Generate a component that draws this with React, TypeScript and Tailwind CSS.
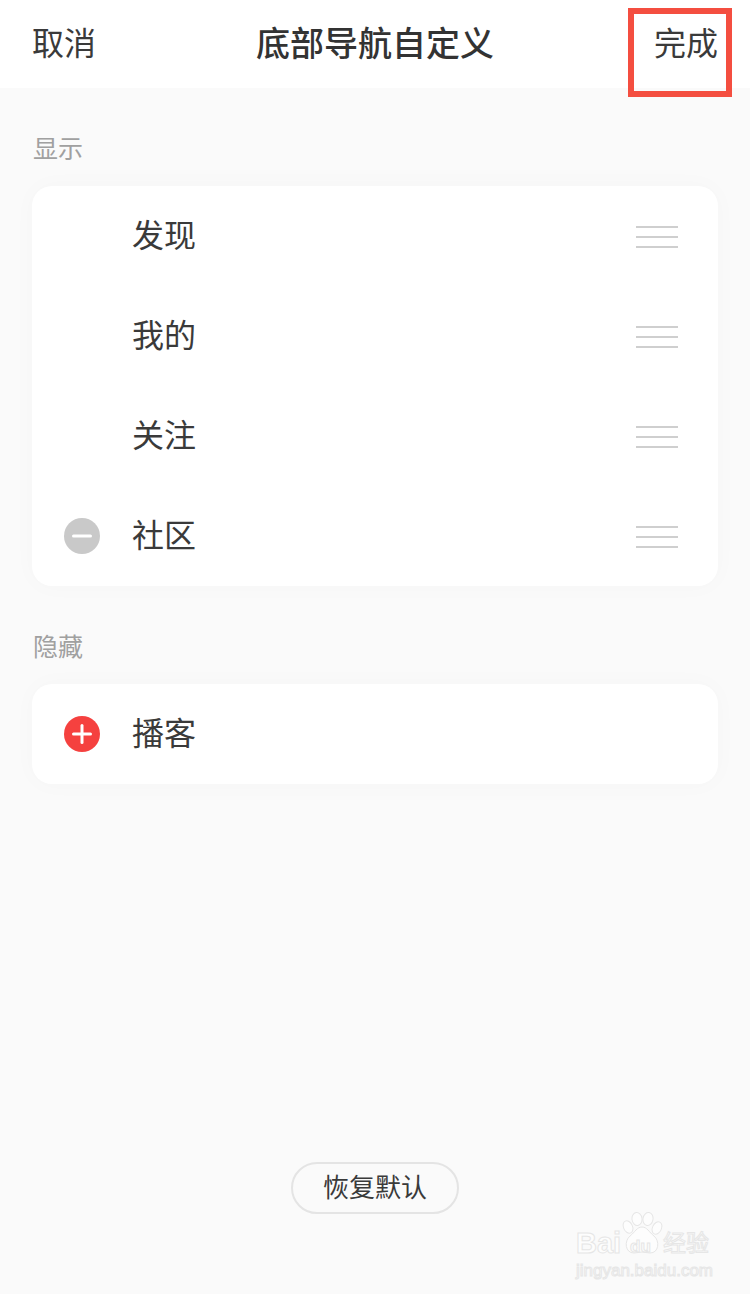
import React from 'react';

interface Item {
  label: string;
  action?: 'remove' | 'add';
  drag?: boolean;
}

const shown: Item[] = [
  { label: '发现', drag: true },
  { label: '我的', drag: true },
  { label: '关注', drag: true },
  { label: '社区', action: 'remove', drag: true },
];

const hidden: Item[] = [{ label: '播客', action: 'add' }];

const DragHandle = () => (
  <div className="mt-[2px] flex w-[42px] flex-col gap-[8px]">
    <div className="h-[2px] bg-[#cfcfcf]" />
    <div className="h-[2px] bg-[#cfcfcf]" />
    <div className="h-[2px] bg-[#cfcfcf]" />
  </div>
);

const ActionIcon = ({ type }: { type: 'remove' | 'add' }) => (
  <svg width="36" height="36" viewBox="0 0 36 36">
    <circle cx="18" cy="18" r="18" fill={type === 'add' ? '#f5413f' : '#c9c9c9'} />
    <rect x="8" y="16.5" width="20" height="3" rx="1.5" fill="#fff" />
    {type === 'add' && <rect x="16.5" y="8" width="3" height="20" rx="1.5" fill="#fff" />}
  </svg>
);

const Row = ({ item }: { item: Item }) => (
  <div className="flex h-[100px] items-center pl-[32px] pr-[40px]">
    <div className="w-[36px]">{item.action && <ActionIcon type={item.action} />}</div>
    <span className="ml-[32px] flex-1 pb-[6px] text-[32px] leading-none text-[#3a3a3a]">{item.label}</span>
    {item.drag && <DragHandle />}
  </div>
);

const Section = ({ title, items }: { title: string; items: Item[] }) => (
  <section className="mx-[32px]">
    <h2 className="flex h-[36px] items-center pb-[2px] pl-px text-[25px] font-normal text-[#a0a0a0]">{title}</h2>
    <div className="mt-[19px] rounded-[20px] bg-white shadow-[0_0_24px_rgba(0,0,0,0.025)]">
      {items.map(item => (
        <Row key={item.label} item={item} />
      ))}
    </div>
  </section>
);

const Watermark = () => (
  <div className="absolute left-[576px] top-[1212px] h-[68px] w-[136px] text-[#fdfdfd] [-webkit-text-stroke:1px_#e6e6e6] font-['Liberation_Sans','Noto_Sans_CJK_SC',sans-serif]">
    <svg className="absolute left-[45px] top-0" width="42" height="44" viewBox="0 0 42 44" fill="#fdfdfd" stroke="#e6e6e6" strokeWidth="1">
      <ellipse cx="7" cy="15" rx="4.5" ry="6.5" transform="rotate(-25 7 15)" />
      <ellipse cx="16" cy="7" rx="5" ry="6.5" transform="rotate(-8 16 7)" />
      <ellipse cx="27" cy="7" rx="5" ry="6.5" transform="rotate(10 27 7)" />
      <ellipse cx="36" cy="16" rx="4.5" ry="6.5" transform="rotate(25 36 16)" />
      <path d="M21 15c5 0 7 5 12 9 6 5 5 17-4 17-3 0-5-1-8-1s-5 1-8 1c-9 0-10-12-4-17 5-4 7-9 12-9z" />
    </svg>
    <span className="absolute left-0 top-[17px] text-[29px] font-bold leading-none">Bai</span>
    <span className="absolute left-[54px] top-[26px] text-[17px] font-bold leading-none">du</span>
    <span className="absolute left-[87px] top-[20px] whitespace-nowrap text-[23px] leading-none">经验</span>
    <span className="absolute left-0 top-[50px] whitespace-nowrap text-[17px] leading-none">jingyan.baidu.com</span>
  </div>
);

export default function App() {
  return (
    <div className="relative h-[1294px] w-[750px] overflow-hidden bg-[#fafafa] font-['Noto_Sans_CJK_SC','Liberation_Sans',sans-serif]">
      <header className="flex h-[88px] items-center justify-between bg-white pb-[6px] pl-[32px] pr-[32px] text-[32px] text-[#3a3a3a]">
        <span>取消</span>
        <h1 className="text-[34px] font-medium text-[#333333]">底部导航自定义</h1>
        <span>完成</span>
      </header>
      {/* red marker drawn on top of the screenshot */}
      <div className="absolute left-[628px] top-[8px] h-[89px] w-[104px] border-[6px] border-[#f44e40]" />

      <main className="pt-[43px]">
        <Section title="显示" items={shown} />
        <div className="h-[43px]" />
        <Section title="隐藏" items={hidden} />
      </main>

      <div className="absolute bottom-[80px] left-[291px] flex h-[52px] w-[168px] items-center justify-center rounded-full border-2 border-[#e4e4e4] pb-[5px] text-[26px] text-[#3a3a3a]">
        恢复默认
      </div>
      <Watermark />
    </div>
  );
}
